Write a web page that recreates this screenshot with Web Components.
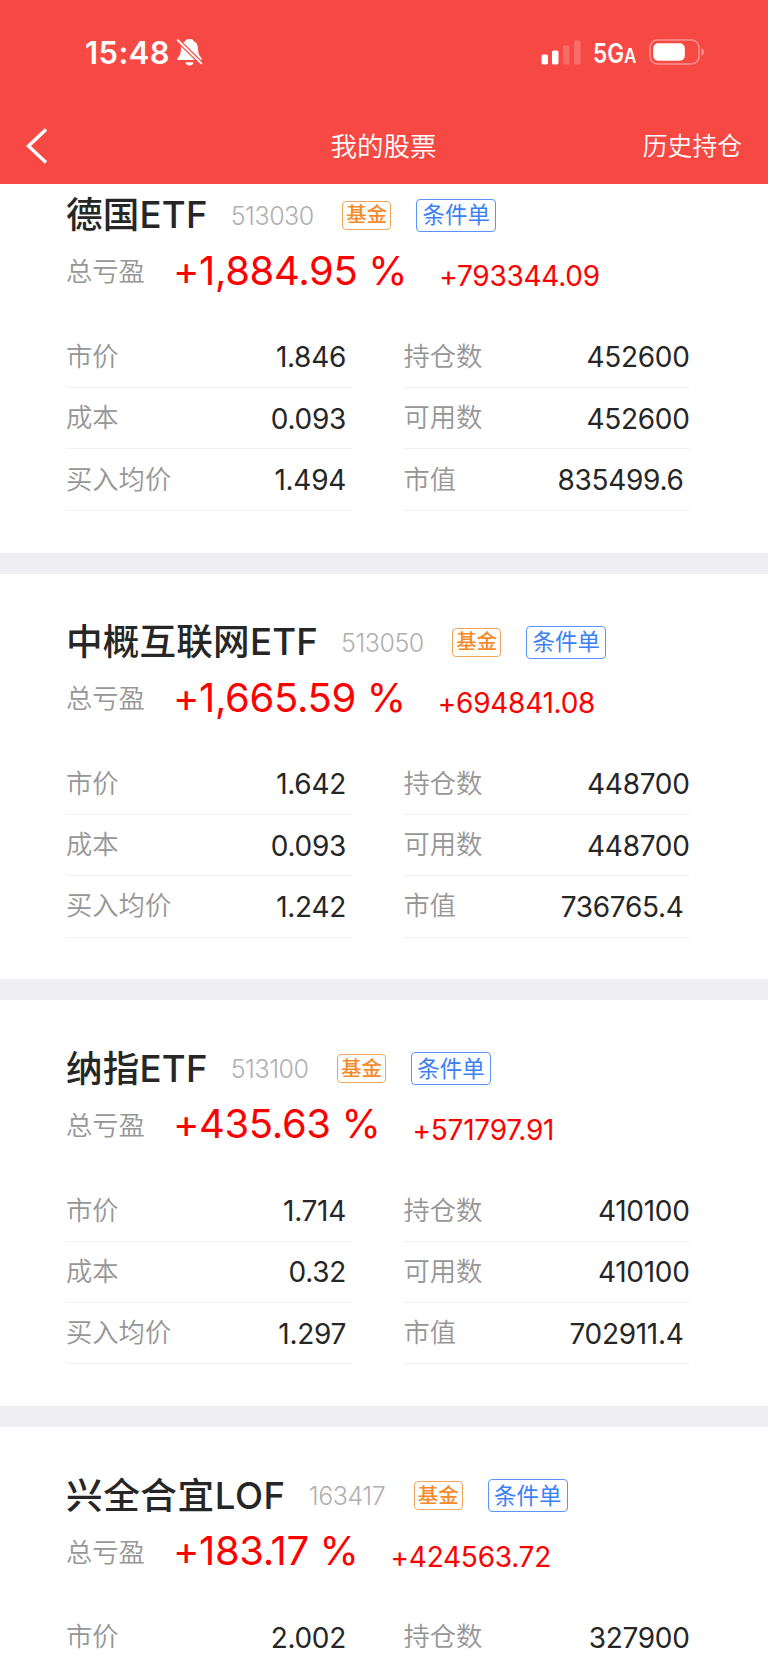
<!DOCTYPE html>
<html lang="zh-CN">
<head>
<meta charset="UTF-8">
<title>我的股票</title>
<style>
    body {
        margin: 0;
        height: 1665px;
        overflow: hidden;
        background: #fff;
        color: #262626;
        font-family: Inter, "Noto Sans CJK SC", sans-serif;
    }
</style>
</head>
<body>
<stock-app></stock-app>

<script>
class StatusBar extends HTMLElement {

    constructor() {
        super();
        this.shadowDOM = this.attachShadow({mode: 'open'});
    }

    connectedCallback() {
        this.shadowDOM.innerHTML = `
        <style>
            :host {
                display: flex;
                height: 104px;
                box-sizing: border-box;
                padding: 0 63px 0 85px;
                align-items: center;
                color: #fff;
            }
            .time { font-size: 31px; font-weight: 600; line-height: 36px; letter-spacing: 0.4px; margin-right: 6px; padding-top: 1px; }
            .bell { width: 27px; height: 28px; }
            .signal { width: 40px; height: 26px; margin-left: auto; margin-right: 12px; }
            .net {
                font-size: 26.500px;
                font-weight: 600;
                line-height: 30px;
                width: 56px;
                white-space: nowrap;
                padding-top: 4px;
            }
            .net span { display: inline-block; transform: scaleX(0.85); transform-origin: left; }
            .net small { font-size: 20px; }
            .battery { width: 56px; height: 26px; }
        </style>
        <span class="time">15:48</span>
        <svg class="bell" viewBox="0 0 26 28">
            <path fill="#fff" d="M13 1c-2.200 0-3.800.9-4.300 2.300C5 4.900 4.500 8.500 4.400 12 4.300 16 3 17.700 1 20.300c-.6.900-.2 1.700.8 1.700h22.400c1 0 1.400-.8.8-1.700-2-2.600-3.300-4.300-3.400-8.300-.1-3.500-.6-7.100-4.300-8.700C16.800 1.900 15.200 1 13 1zM9 24.200h8c-.3 2-2 3.300-4 3.300s-3.700-1.300-4-3.300z"/>
            <path stroke="#f74944" stroke-width="4.400" d="M0 1l26 25.500"/>
            <path stroke="#fff" stroke-width="2" stroke-linecap="round" d="M1.300 2.200l23.500 23.200"/>
        </svg>
        <svg class="signal" viewBox="0 0 40 26" fill="#fff">
            <rect x="0.500" y="15.500" width="6.500" height="10" rx="1.700"/>
            <rect x="11" y="11.500" width="6.500" height="14" rx="1.700"/>
            <rect x="22" y="6.500" width="6.500" height="19" rx="1.700" opacity=".2"/>
            <rect x="33" y="1.200" width="6.500" height="24.300" rx="1.700" opacity=".2"/>
        </svg>
        <span class="net"><span>5G<small>A</small></span></span>
        <svg class="battery" viewBox="0 0 56 26">
            <rect x="1" y="1" width="49" height="24" rx="7.500" fill="none" stroke="#fff" stroke-width="1.600" opacity=".4"/>
            <rect x="4.200" y="4.300" width="31.600" height="17.400" rx="5" fill="#fff"/>
            <path d="M52.300 9.200c1.800.5 2.700 2 2.700 3.800s-.9 3.300-2.700 3.800z" fill="#fff" opacity=".4"/>
        </svg>
        `;
    }
}

class NavBar extends HTMLElement {

    constructor() {
        super();
        this.shadowDOM = this.attachShadow({mode: 'open'});
    }

    connectedCallback() {
        this.shadowDOM.innerHTML = `
        <style>
            :host {
                display: grid;
                grid-template-columns: 1fr auto 1fr;
                align-items: center;
                height: 80px;
                padding: 0 26px 0 25px;
                color: #fff;
                font-weight: 350;
                line-height: 36px;
            }
            svg { width: 24px; height: 36px; margin-top: 3px; }
            span { padding-top: 3px; }
            .title { font-size: 26.500px; }
            .action { font-size: 24.800px; text-align: right; }
        </style>
        <svg viewBox="0 0 24 36"><path d="M21 1.500L3.500 18 21 34.500" fill="none" stroke="#fff" stroke-width="3.400"/></svg>
        <span class="title"><slot></slot></span>
        <span class="action"><slot name="action"></slot></span>
        `;
    }
}

class TagBadge extends HTMLElement {

    constructor() {
        super();
        this.shadowDOM = this.attachShadow({mode: 'open'});
    }

    connectedCallback() {
        this.shadowDOM.innerHTML = `
        <style>
            :host {
                display: inline-flex;
                box-sizing: border-box;
                justify-content: center;
                align-items: center;
                width: 49px;
                height: 29px;
                border: 1px solid #f5a55b;
                border-radius: 4px;
                color: #f58a2c;
                font-size: 20.500px;
                font-weight: 500;
                line-height: 26px;
                white-space: nowrap;
            }
            :host([kind="order"]) {
                width: 80px;
                height: 33px;
                border-color: #5a94fb;
                color: #3c80f7;
                font-size: 22.500px;
                font-weight: 400;
            }
        </style>
        <slot></slot>
        `;
    }
}

class DataRow extends HTMLElement {

    constructor() {
        super();
        this.shadowDOM = this.attachShadow({mode: 'open'});
    }

    connectedCallback() {
        this.shadowDOM.innerHTML = `
        <style>
            :host {
                display: flex;
                box-sizing: border-box;
                justify-content: space-between;
                align-items: center;
                height: 61.330px;
                border-bottom: 1px solid #f1f1f2;
            }
            .label { color: #969696; font-size: 26.300px; font-weight: 350; line-height: 36px; }
            .value {
                font-size: 28px;
                font-weight: 380;
                line-height: 36px;
                letter-spacing: -0.3px;
                padding-top: 1px;
                padding-right: var(--value-inset, 0px);
            }
        </style>
        <span class="label">${this.getAttribute('label')}</span>
        <span class="value"><slot></slot></span>
        `;
    }
}

class HoldingCard extends HTMLElement {

    constructor() {
        super();
        this.shadowDOM = this.attachShadow({mode: 'open'});
    }

    set holding(item) {
        this._holding = item;
        this.render();
    }

    render() {
        const h = this._holding;
        this.shadowDOM.innerHTML = `
        <style>
            :host {
                display: block;
                box-sizing: border-box;
                height: 426.800px;
                padding: 41.500px 78.500px 0 66px;
                border-bottom: 21px solid #eeeef3;
                background: #fff;
            }
            .head, .profit { display: flex; align-items: center; white-space: nowrap; }
            .head { height: 54px; }
            .name { font-size: 36.600px; font-weight: 500; line-height: 50px; letter-spacing: ${h.tracking || 0.2}px; }
            .code { font-size: 25px; font-weight: 300; color: #b0b0b0; letter-spacing: -0.450px; margin: 0 28.500px 0 23px; padding-top: 1px; }
            tag-badge + tag-badge { margin-left: 25px; }
            .profit { height: 56px; }
            .label { font-size: 26.300px; font-weight: 350; color: #969696; line-height: 36px; padding-top: 4px; }
            .percent { font-size: 40px; font-weight: 380; line-height: 50px; color: #fe0000; letter-spacing: -0.350px; margin: 0 32px 0 28px; padding-top: 1px; }
            .amount { font-size: 28px; font-weight: 380; line-height: 36px; color: #fe0000; letter-spacing: -0.250px; padding-top: 12px; }
            .grid {
                display: grid;
                grid-template-columns: 286px 286px;
                justify-content: space-between;
                margin-top: 28.500px;
            }
            .left { --value-inset: 6px; }
            .market { --value-inset: 6px; }
        </style>
        <div class="head">
            <span class="name">${h.name}</span>
            <span class="code">${h.code}</span>
            <tag-badge>基金</tag-badge>
            <tag-badge kind="order">条件单</tag-badge>
        </div>
        <div class="profit">
            <span class="label">总亏盈</span>
            <span class="percent">${h.percent} %</span>
            <span class="amount">${h.amount}</span>
        </div>
        <div class="grid">
            <data-row class="left" label="市价">${h.price}</data-row>
            <data-row label="持仓数">${h.shares}</data-row>
        </div>
        `;

        if (!h.cost) return;

        this.shadowDOM.querySelector('.grid').innerHTML += `
            <data-row class="left" label="成本">${h.cost}</data-row>
            <data-row label="可用数">${h.shares}</data-row>
            <data-row class="left" label="买入均价">${h.average}</data-row>
            <data-row class="market" label="市值">${h.market}</data-row>
        `;
    }
}

class StockApp extends HTMLElement {

    constructor() {
        super();
        this.shadowDOM = this.attachShadow({mode: 'open'});
    }

    connectedCallback() {
        this.render();
    }

    render() {
        this.shadowDOM.innerHTML = `
        <style>
            :host { display: block; height: 1665px; overflow: hidden; }
            header { position: relative; z-index: 1; height: 184px; background: #f74944; }
            /* the list is scrolled a little way under the header */
            main { margin-top: -37.200px; }
        </style>
        <header>
            <status-bar></status-bar>
            <nav-bar>我的股票<span slot="action">历史持仓</span></nav-bar>
        </header>
        <main></main>
        `;

        const list = this.shadowDOM.querySelector('main');
        holdings.forEach(item => {
            const card = document.createElement('holding-card');
            card.holding = item;
            list.appendChild(card);
        });
    }
}

const holdings = [
    {name: '德国ETF', code: '513030', percent: '+1,884.95', amount: '+793344.09', price: '1.846', cost: '0.093', average: '1.494', shares: '452600', market: '835499.6'},
    {name: '中概互联网ETF', code: '513050', percent: '+1,665.59', amount: '+694841.08', price: '1.642', cost: '0.093', average: '1.242', shares: '448700', market: '736765.4'},
    {name: '纳指ETF', code: '513100', percent: '+435.63', amount: '+571797.91', price: '1.714', cost: '0.32', average: '1.297', shares: '410100', market: '702911.4'},
    // only the first row of this one is in view
    {name: '兴全合宜LOF', code: '163417', percent: '+183.17', amount: '+424563.72', price: '2.002', shares: '327900', tracking: 0.6}
];

customElements.define('status-bar', StatusBar);
customElements.define('nav-bar', NavBar);
customElements.define('tag-badge', TagBadge);
customElements.define('data-row', DataRow);
customElements.define('holding-card', HoldingCard);
customElements.define('stock-app', StockApp);
</script>
</body>
</html>
